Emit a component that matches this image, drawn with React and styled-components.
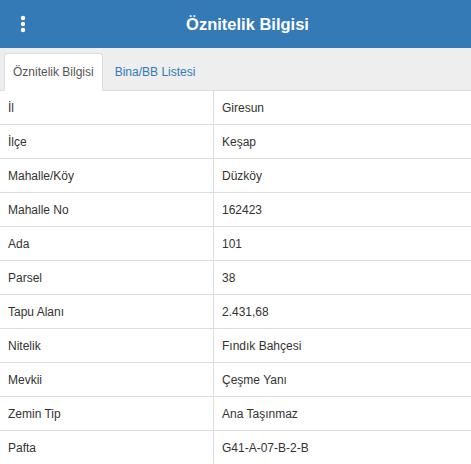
import React from "react";
import styled, { createGlobalStyle } from "styled-components";

const GlobalStyle = createGlobalStyle`
  html, body {
    margin: 0;
    padding: 0;
    background: #fff;
    font-family: "Liberation Sans", Arial, sans-serif;
  }
`;

const Panel = styled.div`
  width: 471px;
  height: 464px;
  overflow: hidden;
  display: flex;
  flex-direction: column;
`;

const Header = styled.header`
  height: 48px;
  flex-shrink: 0;
  background: #337ab7;
  display: grid;
  grid-template-columns: 46px 1fr 46px;
  align-items: center;
  color: #fff;
`;

const MenuButton = styled.button`
  border: none;
  background: none;
  padding: 0;
  width: 46px;
  height: 48px;
  display: flex;
  align-items: center;
  justify-content: center;
  color: #fff;
`;

const Title = styled.h1`
  margin: 0;
  font-size: 16.5px;
  font-weight: bold;
  text-align: center;
  padding-left: 24px;
`;

const TabBar = styled.nav`
  height: 43px;
  flex-shrink: 0;
  background: #eeeeee;
  border-bottom: 1px solid #dddddd;
  box-sizing: border-box;
  display: flex;
  align-items: flex-end;
  gap: 3px;
  padding-left: 4px;
`;

const Tab = styled.div`
  height: 38px;
  box-sizing: border-box;
  padding: 0 8px;
  display: flex;
  align-items: center;
  font-size: 12px;
  margin-bottom: -1px;
  background: ${(p) => (p.$active ? "#fff" : "transparent")};
  color: ${(p) => (p.$active ? "#555" : "#337ab7")};
  border: 1px solid ${(p) => (p.$active ? "#dddddd" : "transparent")};
  border-bottom-color: ${(p) => (p.$active ? "#fff" : "transparent")};
  border-radius: 3px 3px 0 0;
`;

const Table = styled.div`
  display: grid;
  grid-template-columns: 213px 1fr;
`;

const Cell = styled.div`
  height: 34px;
  box-sizing: border-box;
  padding: 0 8px;
  display: flex;
  align-items: center;
  font-size: 12px;
  color: #333;
  border-bottom: 1px solid #dddddd;
  border-left: ${(p) => (p.$value ? "1px solid #dddddd" : "none")};
`;

const rows = [
  ["İl", "Giresun"],
  ["İlçe", "Keşap"],
  ["Mahalle/Köy", "Düzköy"],
  ["Mahalle No", "162423"],
  ["Ada", "101"],
  ["Parsel", "38"],
  ["Tapu Alanı", "2.431,68"],
  ["Nitelik", "Fındık Bahçesi"],
  ["Mevkii", "Çeşme Yanı"],
  ["Zemin Tip", "Ana Taşınmaz"],
  ["Pafta", "G41-A-07-B-2-B"],
];

const KebabIcon = () => (
  <svg width="6" height="18" viewBox="0 0 6 18">
    <circle cx="3" cy="3" r="2.2" fill="currentColor" />
    <circle cx="3" cy="9" r="2.2" fill="currentColor" />
    <circle cx="3" cy="15" r="2.2" fill="currentColor" />
  </svg>
);

const App = () => {
  return (
    <Panel>
      <GlobalStyle />
      <Header>
        <MenuButton aria-label="menu">
          <KebabIcon />
        </MenuButton>
        <Title>Öznitelik Bilgisi</Title>
        <span />
      </Header>
      <TabBar>
        <Tab $active>Öznitelik Bilgisi</Tab>
        <Tab>Bina/BB Listesi</Tab>
      </TabBar>
      <Table>
        {rows.map(([label, value]) => (
          <React.Fragment key={label}>
            <Cell>{label}</Cell>
            <Cell $value>{value}</Cell>
          </React.Fragment>
        ))}
      </Table>
    </Panel>
  );
};

export default App;
